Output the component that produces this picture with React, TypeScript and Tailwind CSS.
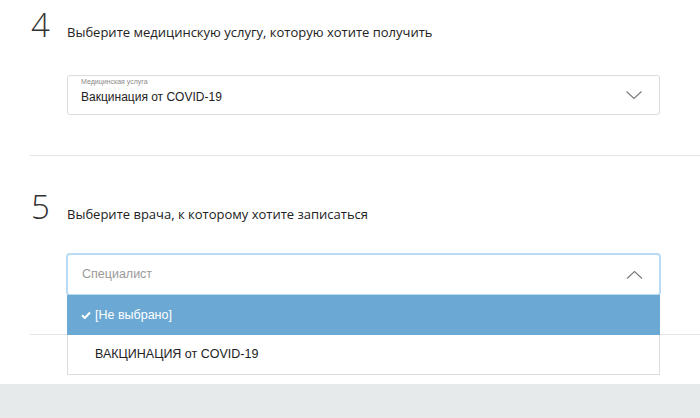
import { useState } from "react";

const ChevronDown = () => (
  <svg width="18" height="10" viewBox="0 0 18 10" fill="none">
    <path d="M1.5 1.5l7.5 7 7.5-7" stroke="#7a7a7a" strokeWidth="1.1" />
  </svg>
);

const ChevronUp = () => (
  <svg width="17" height="10" viewBox="0 0 17 10" fill="none">
    <path d="M1 8.5l7.5-7 7.5 7" stroke="#7a7a7a" strokeWidth="1.1" />
  </svg>
);

const Step = ({ n, title }: { n: string; title: string }) => (
  <div className="flex items-baseline pl-[31px]">
    <span className="w-[36px] text-[33px] leading-[40px] font-light text-[#333] font-['Open_Sans',sans-serif]">
      {n}
    </span>
    <span className="text-[13px] text-[#222] font-['Open_Sans',sans-serif]">{title}</span>
  </div>
);

const App = () => {
  const [open] = useState(true);
  const options = ["[Не выбрано]", "ВАКЦИНАЦИЯ от COVID-19"];

  return (
    <div className="w-[700px] h-[418px] bg-white overflow-hidden flex flex-col font-['Liberation_Sans',Arial,sans-serif]">
      {/* step 4 */}
      <div className="pt-[5px]">
        <Step n="4" title="Выберите медицинскую услугу, которую хотите получить" />
        <div className="ml-[67px] mt-[30px] w-[593px] h-[40px] border border-[#dcdcdc] rounded-[3px] flex items-center pl-[13px] pr-[16px]">
          <div className="flex-1 self-start pt-[2px]">
            <div className="text-[7px] leading-[8px] text-[#8a8a8a] mb-[4px]">Медицинская услуга</div>
            <div className="text-[12px] leading-[14px] text-[#222]">Вакцинация от COVID-19</div>
          </div>
          <ChevronDown />
        </div>
      </div>
      <div className="ml-[30px] mt-[40px] h-px bg-[#e6e6e6]" />

      {/* step 5 */}
      <div className="pt-[31px]">
        <Step n="5" title="Выберите врача, к которому хотите записаться" />
        <div className="relative ml-[66px] mt-[26px] w-[595px] z-10">
          <div className="h-[43px] border-2 border-[#b8dcf3] rounded-[4px] flex items-center pl-[14px] pr-[16px]">
            <span className="flex-1 text-[12.5px] text-[#9a9a9a]">Специалист</span>
            <ChevronUp />
          </div>
          {open && (
            <ul className="absolute left-[1px] top-[42px] w-[593px] bg-white">
              {options.map((o, i) =>
                i === 0 ? (
                  <li key={o} className="h-[40px] bg-[#6ba8d3] text-white text-[12.5px] flex items-center pl-[14px]">
                    <svg width="10" height="8" viewBox="0 0 10 8" className="mr-[4px]">
                      <path d="M1 4.2l2.8 2.8L9 1.5" stroke="#fff" strokeWidth="2" fill="none" />
                    </svg>
                    {o}
                  </li>
                ) : (
                  <li key={o} className="h-[40px] border border-t-0 border-[#dcdcdc] text-[#222] text-[12.5px] flex items-center pl-[27px]">
                    {o}
                  </li>
                )
              )}
            </ul>
          )}
        </div>
      </div>
      <div className="ml-[30px] mt-[38px] h-px bg-[#e6e6e6]" />
      <div className="mt-auto h-[34px] bg-[#e6eaea]" />
    </div>
  );
};

export default App;
